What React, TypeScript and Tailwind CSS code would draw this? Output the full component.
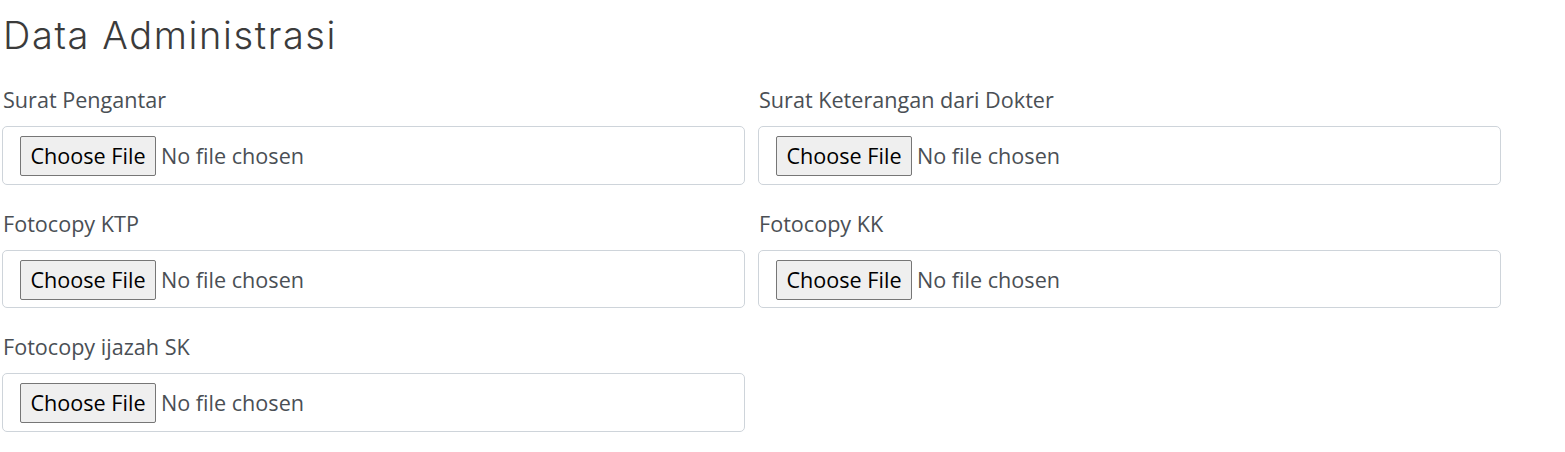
import React from 'react';

const fields = [
  'Surat Pengantar',
  'Surat Keterangan dari Dokter',
  'Fotocopy KTP',
  'Fotocopy KK',
  'Fotocopy ijazah SK',
];

function FileField({ label }: { label: string }) {
  return (
    <div className="flex flex-col">
      <label className="text-[21.6px] leading-[30px] text-[#4a4f55] pl-px mb-[11px]">{label}</label>
      <div className="h-[58.5px] border border-[#ced4da] rounded-[5px] bg-white flex items-start pt-[9px] pl-[17px]">
        <button
          type="button"
          className="h-[40px] w-[136px] border border-[#767676] rounded-[2px] bg-[#efefef] text-[21.6px] text-black leading-none"
        >
          Choose File
        </button>
        <span className="ml-[5px] text-[21.6px] leading-[40px] text-[#4a4f55]">No file chosen</span>
      </div>
    </div>
  );
}

export default function App() {
  return (
    <div className="min-h-[452px] bg-white px-[2px] font-['Open_Sans',sans-serif]">
      <h1 className="mt-[13px] mb-[28px] pl-[1px] text-[38px] leading-[44px] font-light text-[#3b3b3b] font-['Inter',sans-serif] tracking-[1.6px]">
        Data Administrasi
      </h1>
      <div className="grid grid-cols-[743px_743px] gap-x-[13px] gap-y-[24px]">
        {fields.map((f) => (
          <FileField key={f} label={f} />
        ))}
      </div>
    </div>
  );
}
